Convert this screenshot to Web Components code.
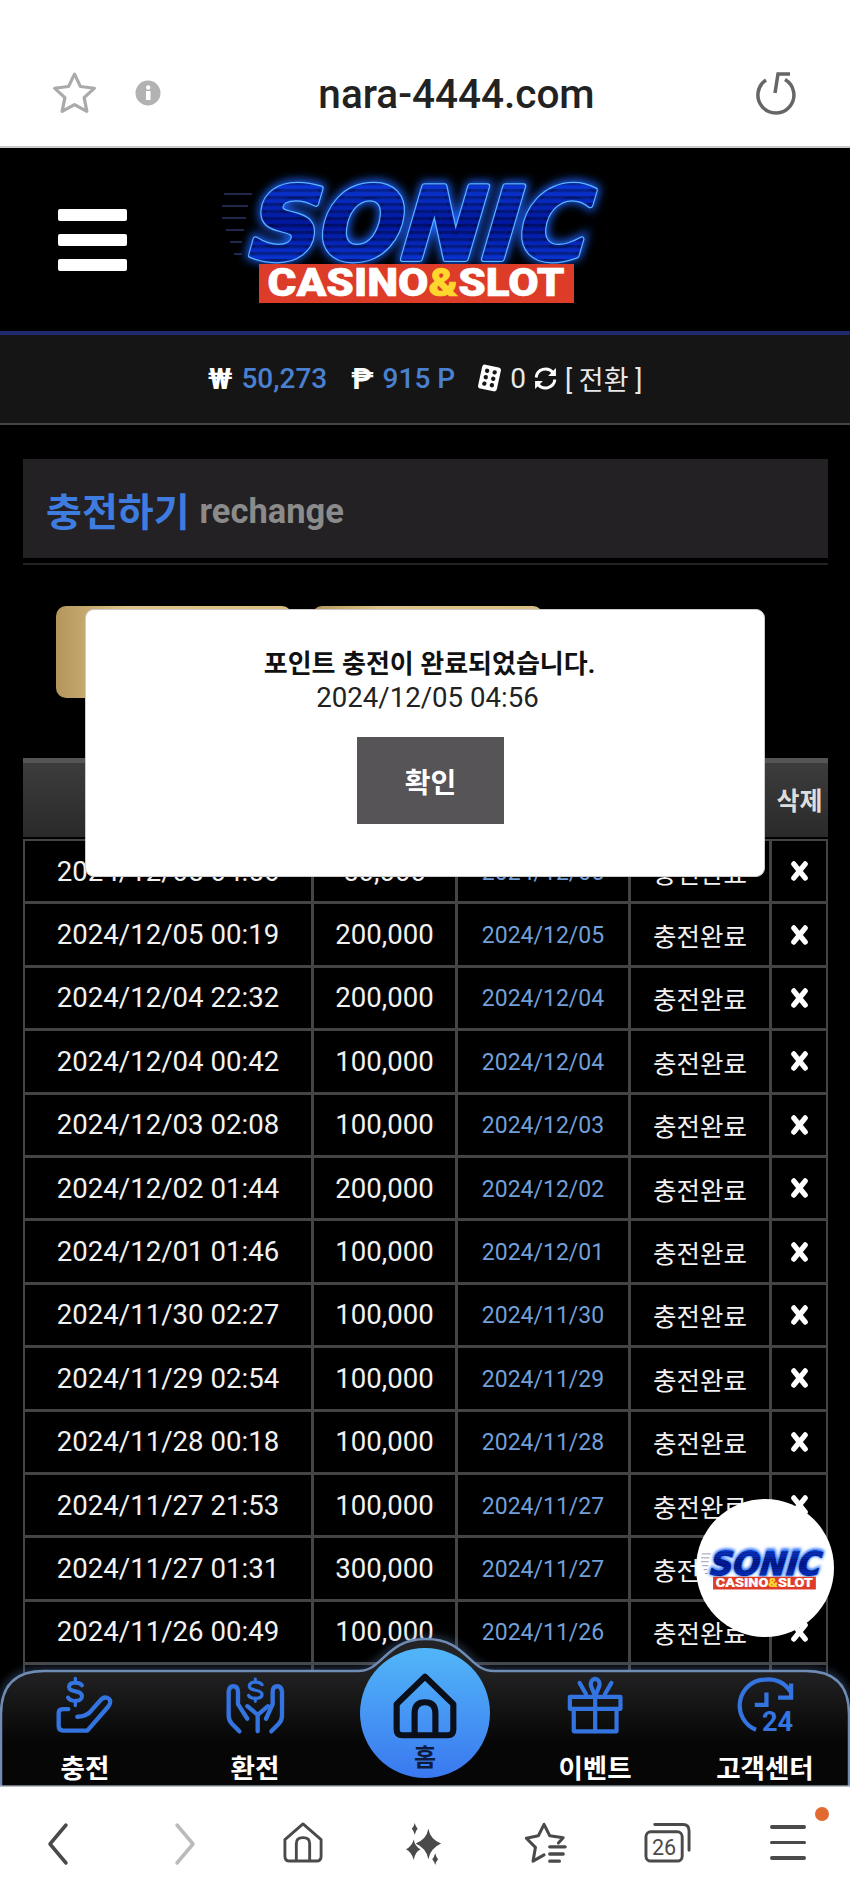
<!DOCTYPE html>
<html lang="ko">
<head>
<meta charset="utf-8">
<title>nara-4444.com</title>
<style>
  html, body { margin: 0; height: 1898px; overflow: hidden; background: #000; }
  body { display: flex; flex-direction: column; font-family: Roboto, "Noto Sans CJK KR", sans-serif; }
</style>
</head>
<body>
<browser-top url="nara-4444.com"></browser-top>
<site-page>
  <site-header></site-header>
  <wallet-bar></wallet-bar>
  <recharge-panel>
    <recharge-row when="2024/12/05 04:56" amount="50,000" day="2024/12/05"></recharge-row>
    <recharge-row when="2024/12/05 00:19" amount="200,000" day="2024/12/05"></recharge-row>
    <recharge-row when="2024/12/04 22:32" amount="200,000" day="2024/12/04"></recharge-row>
    <recharge-row when="2024/12/04 00:42" amount="100,000" day="2024/12/04"></recharge-row>
    <recharge-row when="2024/12/03 02:08" amount="100,000" day="2024/12/03"></recharge-row>
    <recharge-row when="2024/12/02 01:44" amount="200,000" day="2024/12/02"></recharge-row>
    <recharge-row when="2024/12/01 01:46" amount="100,000" day="2024/12/01"></recharge-row>
    <recharge-row when="2024/11/30 02:27" amount="100,000" day="2024/11/30"></recharge-row>
    <recharge-row when="2024/11/29 02:54" amount="100,000" day="2024/11/29"></recharge-row>
    <recharge-row when="2024/11/28 00:18" amount="100,000" day="2024/11/28"></recharge-row>
    <recharge-row when="2024/11/27 21:53" amount="100,000" day="2024/11/27"></recharge-row>
    <recharge-row when="2024/11/27 01:31" amount="300,000" day="2024/11/27"></recharge-row>
    <recharge-row when="2024/11/26 00:49" amount="100,000" day="2024/11/26"></recharge-row>
    <recharge-row></recharge-row>
  </recharge-panel>
  <alert-box title="포인트 충전이 완료되었습니다." time="2024/12/05 04:56" action="확인"></alert-box>
  <float-badge></float-badge>
  <tab-bar></tab-bar>
</site-page>
<browser-bottom></browser-bottom>

<script>
/**
 * Inline icons, keyed by name. Each entry is [viewBox, inner markup].
 */
const ICONS = {
  star: ['0 0 44 44', '<path d="M22 3l5.6 12.6 13 1.6-9.6 9.4 2.6 13.8L22 33.6 10.4 40.4 13 26.6 3.400 17.200l13-1.600z" fill="none" stroke="#aaa" stroke-width="3" stroke-linejoin="round"/>'],
  info: ['0 0 26 26', '<circle cx="13" cy="13" r="12.500" fill="#b2b2b2"/><rect x="11" y="11" width="4.500" height="9" fill="#fff"/><circle cx="13.200" cy="7.500" r="2.200" fill="#fff"/>'],
  reload: ['0 0 44 44', '<path d="M14 9A18 18 0 1 0 33 8.500" fill="none" stroke="#666" stroke-width="3.500"/><path d="M38 3H26L23 22" fill="none" stroke="#666" stroke-width="3.500"/>'],
  dice: ['0 0 24 32', '<g transform="rotate(12 12 16)"><rect x="2" y="3" width="20" height="26" rx="3" fill="#fff"/><g fill="#151515"><circle cx="8" cy="9" r="2.300"/><circle cx="16" cy="9" r="2.300"/><circle cx="8" cy="16" r="2.300"/><circle cx="16" cy="16" r="2.300"/><circle cx="8" cy="23" r="2.300"/><circle cx="16" cy="23" r="2.300"/></g></g>'],
  sync: ['0 0 24 24', '<g fill="none" stroke="#fff" stroke-width="2.800"><path d="M3 11A9.200 9.200 0 0 1 19 6"/><path d="M21 13A9.200 9.200 0 0 1 5 18"/></g><path d="M22 2v7.500h-7.500zM2 22v-7.500h7.500z" fill="#fff"/>'],
  cross: ['0 0 20 22', '<path d="M4 4l12 14M16 4L4 18" stroke="#fff" stroke-width="5.500" stroke-linecap="round"/>'],
  charge: ['165 105 180 175', '<g fill="none" stroke="#3474e0" stroke-width="13" stroke-linecap="round" stroke-linejoin="round"><path d="M205 205H188Q176 205 176 217V256Q176 270 190 270H262L325 197Q338 178 322 171Q310 166 298 182L275 208Q262 226 232 228"/><path d="M246 133C238 122 207 122 207 138C207 156 246 146 246 166C246 184 212 184 204 170" stroke-width="12"/><path d="M226 112V124M226 182V194" stroke-width="10"/></g>'],
  exchange: ['675 105 180 175', '<g fill="none" stroke="#3474e0" stroke-width="13" stroke-linecap="round" stroke-linejoin="round"><path d="M718 272L695 248Q686 238 686 224V152Q688 136 700 136Q713 136 714 152V190L742 234"/><path d="M814 272L837 248Q846 238 846 224V152Q844 136 832 136Q819 136 818 152V190L798 234"/><path d="M773 272V222L742 196"/><path d="M773 222L804 196"/><path d="M786 131C778 120 748 120 748 136C748 152 786 144 786 160C786 176 752 176 746 164" stroke-width="10"/><path d="M766 114V122M766 172V182" stroke-width="9"/></g>'],
  home: ['0 0 72 72', '<path d="M36 4L66 34V62Q66 68 60 68H12Q6 68 6 62V34Z" fill="none" stroke="#0b0f1a" stroke-width="6.500" stroke-linejoin="round"/><path d="M25 67V44Q25 32 36 32Q47 32 47 44V67" fill="none" stroke="#0b0f1a" stroke-width="6.500"/>'],
  gift: ['405 105 185 175', '<g fill="none" stroke="#3474e0" stroke-width="13" stroke-linejoin="round" stroke-linecap="round"><path d="M420 204V168H576V204Z"/><path d="M432 204V272H564V204"/><path d="M498 168V272"/><path d="M498 166L485 135Q482 116 498 114Q514 116 511 135Z"/><path d="M450 126L470 160M548 126L528 160"/></g>'],
  support: ['915 105 185 175', '<g fill="none" stroke="#3474e0" stroke-width="13"><path d="M1086 152A78 78 0 0 0 1008 116A78 78 0 0 0 980 267"/><path d="M1088 128V170H1048"/><path d="M1012 155V192H976"/></g><text x="998" y="272" font-family="Roboto, sans-serif" font-weight="700" font-size="84" fill="#3474e0">24</text>'],
  back: ['0 0 24 44', '<path d="M20 3L4 22L20 41" fill="none" stroke="#4a4a4a" stroke-width="3.500" stroke-linecap="round" stroke-linejoin="round"/>'],
  forward: ['0 0 24 44', '<path d="M4 3L20 22L4 41" fill="none" stroke="#bbb" stroke-width="3.500" stroke-linecap="round" stroke-linejoin="round"/>'],
  house: ['0 0 42 42', '<path d="M21 2L40 18V35Q40 40 35 40H7Q2 40 2 35V18Z" fill="none" stroke="#4a4a4a" stroke-width="3" stroke-linejoin="round"/><path d="M14 39V22Q14 16 21 16Q28 16 28 22V39" fill="none" stroke="#4a4a4a" stroke-width="3"/>'],
  sparkle: ['0 0 38 44', '<g fill="#4a4a4a"><path d="M24 7Q26 18 37 22Q26 27 24 38Q22 27 11 22Q22 18 24 7Z"/><path d="M9 18Q10 25 16 28Q10 31 9 39Q7 31 1 28Q7 25 9 18Z"/><path d="M10 1Q11 5 13 7Q11 9 10 13Q9 9 7 7Q9 5 10 1Z"/><path d="M31 32Q32 36 34 38Q32 40 31 44Q30 40 28 38Q30 36 31 32Z"/></g>'],
  starlist: ['0 0 46 44', '<path d="M37 22L42 16.500L28 14.500L22 2.500L16 14.500L3.500 17L13 26.500L10.500 41L22 34.500" fill="none" stroke="#4a4a4a" stroke-width="3.200" stroke-linejoin="round" stroke-linecap="round"/><path d="M28 26H44M28 33.500H42M28 41H38" stroke="#4a4a4a" stroke-width="3.500" stroke-linecap="round"/>'],
  tabs: ['0 0 48 42', '<rect x="2" y="10" width="37" height="30" rx="5" fill="none" stroke="#4a4a4a" stroke-width="3"/><path d="M11 2.500H40Q46 2.500 46 9V29" fill="none" stroke="#4a4a4a" stroke-width="3" stroke-linecap="round"/><text x="20.500" y="33.500" text-anchor="middle" font-family="Roboto, sans-serif" font-size="22" fill="#4a4a4a">26</text>']
};

/**
 * Draws one icon from the table above.
 * The attribute w sets the width, h the height.
 *
 * @customElement
 */
class UiIcon extends HTMLElement {
  connectedCallback() {
    const [box, body] = ICONS[this.getAttribute('name')];
    const w = this.getAttribute('w');
    const h = this.getAttribute('h');
    this.attachShadow({mode: 'open'}).innerHTML = `
      <style>:host{display:block;width:${w}px;height:${h}px} svg{display:block;width:100%;height:100%;overflow:visible}</style>
      <svg viewBox="${box}" preserveAspectRatio="none">${body}</svg>`;
  }
}
customElements.define('ui-icon', UiIcon);

/**
 * The white address bar of the browser.
 *
 * @customElement
 */
class BrowserTop extends HTMLElement {
  connectedCallback() {
    this.attachShadow({mode: 'open'}).innerHTML = `
      <style>
        :host{display:flex;flex:none;align-items:center;box-sizing:border-box;height:148px;padding:39px 54px 0 51px;background:#fff;border-bottom:2px solid #c9c9c9;color:#222}
        .info{margin-left:37px}
        .url{flex:1;text-align:center;font:500 40.500px Roboto,sans-serif;padding-top:2px}
      </style>
      <ui-icon name="star" w="47" h="44"></ui-icon>
      <ui-icon class="info" name="info" w="26" h="26"></ui-icon>
      <div class="url">${this.getAttribute('url')}</div>
      <ui-icon name="reload" w="44" h="44"></ui-icon>`;
  }
}
customElements.define('browser-top', BrowserTop);

/**
 * The page below the address bar. Clips what runs off under the tab bar
 * and is the frame for the overlays.
 *
 * @customElement
 */
class SitePage extends HTMLElement {
  constructor() {
    super();
    this.attachShadow({mode: 'open'}).innerHTML = `
      <style>:host{display:block;position:relative;flex:1;min-height:0;overflow:hidden;background:#000;color:#fff}</style>
      <slot></slot>`;
  }
}
customElements.define('site-page', SitePage);

/**
 * The SONIC casino logo, kept as real text. The width attribute scales it.
 *
 * @customElement
 */
class SonicLogo extends HTMLElement {
  connectedCallback() {
    const w = this.getAttribute('w');
    const sonic = `x="197" y="77" textLength="340" lengthAdjust="spacingAndGlyphs" transform="skewX(-6) translate(8 0)"`;
    this.attachShadow({mode: 'open'}).innerHTML = `
      <style>:host{display:block;width:${w}px} svg{display:block;width:100%;height:auto;overflow:visible}</style>
      <svg viewBox="0 0 380 128">
        <defs>
          <linearGradient id="fill" x1="0" y1="0" x2="0" y2="1">
            <stop offset="0" stop-color="#1046f2"/><stop offset=".5" stop-color="#00169a"/><stop offset="1" stop-color="#1046f2"/>
          </linearGradient>
          <pattern id="stripes" width="6" height="7" patternUnits="userSpaceOnUse">
            <rect width="6" height="3" fill="#000" opacity=".3"/>
          </pattern>
          <filter id="glow" x="-15%" y="-30%" width="130%" height="160%">
            <feGaussianBlur stdDeviation="5"/>
          </filter>
        </defs>
        <g stroke="#2b3668" stroke-width="1.500">
          <path d="M2 12H30M0 24H26M0 36H24M4 48H22M8 60H20M12 72H20"/>
        </g>
        <g font-family="'DejaVu Sans',sans-serif" font-weight="700" font-style="italic" font-size="100" text-anchor="middle">
          <text ${sonic} fill="#1c62ff" stroke="#1c62ff" stroke-width="9" filter="url(#glow)">SONIC</text>
          <text ${sonic} fill="#5ab4ff" stroke="#5ab4ff" stroke-width="6" stroke-linejoin="round">SONIC</text>
          <text ${sonic} fill="url(#fill)" stroke="url(#fill)" stroke-width="3.500" stroke-linejoin="round">SONIC</text>
          <text ${sonic} fill="url(#stripes)" stroke="url(#stripes)" stroke-width="3.500" stroke-linejoin="round">SONIC</text>
        </g>
        <rect x="37" y="82" width="315" height="39" fill="#dd3c28"/>
        <text x="194" y="114" text-anchor="middle" textLength="297" lengthAdjust="spacingAndGlyphs" font-family="Roboto,sans-serif" font-weight="900" font-size="38" fill="#fff" stroke="#fff" stroke-width=".6">CASINO<tspan fill="#ffd62e" stroke="#ffd62e">&amp;</tspan>SLOT</text>
      </svg>`;
  }
}
customElements.define('sonic-logo', SonicLogo);

/**
 * Site header: burger menu and logo.
 *
 * @customElement
 */
class SiteHeader extends HTMLElement {
  connectedCallback() {
    this.attachShadow({mode: 'open'}).innerHTML = `
      <style>
        :host{display:flex;align-items:flex-start;box-sizing:border-box;height:187px;padding:34px 0 0 58px;background:#000;border-bottom:4px solid #1e2a6b}
        .burger{display:flex;flex-direction:column;gap:13px;margin-top:27px;width:69px}
        .burger i{display:block;height:12px;border-radius:2px;background:#fff}
        sonic-logo{margin-left:95px}
      </style>
      <div class="burger"><i></i><i></i><i></i></div>
      <sonic-logo w="380"></sonic-logo>`;
  }
}
customElements.define('site-header', SiteHeader);

/**
 * Balance line under the header.
 *
 * @customElement
 */
class WalletBar extends HTMLElement {
  connectedCallback() {
    this.attachShadow({mode: 'open'}).innerHTML = `
      <style>
        :host{display:flex;align-items:center;box-sizing:border-box;height:90px;padding:0 0 2px 208px;background:#151515;border-bottom:2px solid #444;font:500 28px Roboto,"Noto Sans CJK KR",sans-serif;color:#e8e8e8;white-space:nowrap}
        b{color:#fff;font-weight:700;font-size:30px}
        .num{color:#4a80d0;margin-left:9px}
        .p{margin-left:24px}
        ui-icon{flex:none}
        .n{font-weight:400;margin:0 7px 0 9px}
        .sw{margin-left:7px;font-weight:400;font-size:27px}
      </style>
      <b>₩</b><span class="num">50,273</span>
      <b class="p">₱</b><span class="num">915 P</span>
      <ui-icon style="margin-left:23px" name="dice" w="23" h="30"></ui-icon>
      <span class="n">0</span>
      <ui-icon name="sync" w="25" h="25"></ui-icon>
      <span class="sw">[ 전환 ]</span>`;
  }
}
customElements.define('wallet-bar', WalletBar);

/**
 * Recharge section: title, the two tab buttons and the table. Rows are slotted.
 *
 * @customElement
 */
class RechargePanel extends HTMLElement {
  connectedCallback() {
    this.attachShadow({mode: 'open'}).innerHTML = `
      <style>
        :host{display:block;padding:34px 22px 0 23px}
        .title{display:flex;align-items:center;gap:10px;height:99px;padding:0 0 0 23px;background:#232123}
        .title strong{font:700 39px Roboto,"Noto Sans CJK KR",sans-serif;color:#3f7ce0}
        .title span{font:700 34.500px Roboto,sans-serif;color:#8b8b8b;padding-top:4px}
        .rule{height:2px;margin-top:5px;background:#222}
        .tabs{display:flex;gap:20px;padding:41px 0 0 33px}
        .tabs i{display:block;height:92px;border-radius:10px;background:linear-gradient(90deg,#b4965c,#dcc288 30%,#d8bd82)}
        .tabs i:first-child{width:236px}
        .tabs i:last-child{width:231px}
        .head{display:flex;justify-content:flex-end;align-items:center;box-sizing:border-box;height:79px;margin-top:60px;padding-bottom:3px;border-top:5px solid #555;background:linear-gradient(#3c3c3c,#2a2a2a);font:700 25px "Noto Sans CJK KR",sans-serif;color:#ddd}
        .head span{width:57px;text-align:center}
        .rows{display:block;margin-top:2px;background:#444;padding-top:2px}
      </style>
      <div class="title"><strong>충전하기</strong><span>rechange</span></div>
      <div class="rule"></div>
      <div class="tabs"><i></i><i></i></div>
      <div class="head"><span>삭제</span></div>
      <div class="rows"><slot></slot></div>`;
  }
}
customElements.define('recharge-panel', RechargePanel);

/**
 * One row of the recharge table.
 *
 * @customElement
 */
class RechargeRow extends HTMLElement {
  connectedCallback() {
    const when = this.getAttribute('when');
    const filled = when !== null;
    this.attachShadow({mode: 'open'}).innerHTML = `
      <style>
        :host{display:grid;grid-template-columns:286px 141px 170px 138px 1fr;gap:3px;height:60.400px;padding:0 2px 3px;font:400 27.600px Roboto,"Noto Sans CJK KR",sans-serif;color:#f2f2f2}
        div{display:flex;align-items:center;justify-content:center;background:#000;white-space:nowrap}
        .day{font-size:23px;color:#719fd8;padding-top:2px}
        .state{font-size:25.500px}
      </style>
      <div>${filled ? when : ''}</div>
      <div>${filled ? this.getAttribute('amount') : ''}</div>
      <div class="day">${filled ? this.getAttribute('day') : ''}</div>
      <div class="state">${filled ? '충전완료' : ''}</div>
      <div>${filled ? '<ui-icon name="cross" w="19" h="22"></ui-icon>' : ''}</div>`;
  }
}
customElements.define('recharge-row', RechargeRow);

/**
 * The white confirmation dialog that lies over the panel.
 *
 * @customElement
 */
class AlertBox extends HTMLElement {
  connectedCallback() {
    this.attachShadow({mode: 'open'}).innerHTML = `
      <style>
        :host{position:absolute;left:85px;top:461px;width:680px;height:268px;box-sizing:border-box;padding:36px 0 0 9px;display:flex;flex-direction:column;align-items:center;background:#fff;border-radius:9px;border:1px solid #ccc;color:#111;font-family:Roboto,"Noto Sans CJK KR",sans-serif}
        .t{font-weight:700;font-size:26px;line-height:36px;white-space:nowrap}
        .d{font-size:27.600px;line-height:32px;color:#222;margin-right:4px}
        .b{display:flex;align-items:center;justify-content:center;width:147px;height:87px;margin:23px 0 0 2px;background:#565456;color:#fff;font-weight:700;font-size:28px}
      </style>
      <div class="t">${this.getAttribute('title')}</div>
      <div class="d">${this.getAttribute('time')}</div>
      <div class="b">${this.getAttribute('action')}</div>`;
  }
}
customElements.define('alert-box', AlertBox);

/**
 * Floating round button with the small logo.
 *
 * @customElement
 */
class FloatBadge extends HTMLElement {
  connectedCallback() {
    this.attachShadow({mode: 'open'}).innerHTML = `
      <style>:host{position:absolute;right:16px;bottom:150px;width:138px;height:138px;border-radius:50%;background:#fff;display:flex;align-items:center;justify-content:center}
      sonic-logo{margin-left:-4px;margin-top:5px}</style>
      <sonic-logo w="124"></sonic-logo>`;
  }
}
customElements.define('float-badge', FloatBadge);

/**
 * Bottom tab bar with the raised home button.
 *
 * @customElement
 */
class TabBar extends HTMLElement {
  connectedCallback() {
    const tabs = [['charge', '충전'], ['exchange', '환전'], null, ['gift', '이벤트'], ['support', '고객센터']];
    const items = tabs.map(t => t
      ? `<div class="tab"><ui-icon name="${t[0]}" w="60" h="58"></ui-icon><span>${t[1]}</span></div>`
      : `<div class="tab mid"><div class="circle"><ui-icon name="home" w="68" h="66"></ui-icon><span>홈</span></div></div>`
    ).join('');
    this.attachShadow({mode: 'open'}).innerHTML = `
      <style>
        :host{position:absolute;left:0;right:0;bottom:0;height:149px;display:grid;grid-template-columns:repeat(5,170px);font-family:"Noto Sans CJK KR",sans-serif;color:#fff}
        svg.shape{position:absolute;left:0;top:0;width:850px;height:149px;overflow:visible;}
        .tab{position:relative;display:flex;flex-direction:column;align-items:center;padding-top:38px}
        .tab span{margin-top:17px;font-weight:700;font-size:26.500px;line-height:32px;white-space:nowrap}
        .mid{padding-top:10px}
        .circle{display:flex;flex-direction:column;align-items:center;box-sizing:border-box;width:130px;height:130px;padding-top:25px;border-radius:50%;background:linear-gradient(#52b6f8,#3a78f0)}
        .circle span{margin-top:3px;font-size:24px;line-height:28px;color:#0d1c3c}
      </style>
      <svg class="shape" viewBox="0 0 850 149" preserveAspectRatio="none">
        <defs>
          <linearGradient id="bg" x1="0" y1="0" x2="0" y2="1"><stop offset=".2" stop-color="#232325"/><stop offset=".7" stop-color="#060606"/></linearGradient>
          <filter id="halo" x="-5%" y="-20%" width="110%" height="140%"><feGaussianBlur stdDeviation="4"/></filter>
        </defs>
        <path d="M1 149V76Q1 33 44 33H358C384 33 385 1 426 1C467 1 468 33 494 33H806Q849 33 849 76V149" fill="none" stroke="#5a7cb0" stroke-width="5" opacity=".6" filter="url(#halo)"/>
        <path d="M1 149V76Q1 33 44 33H358C384 33 385 1 426 1C467 1 468 33 494 33H806Q849 33 849 76V149Z" fill="url(#bg)" stroke="#6f8cb4" stroke-width="2.500"/>
        <rect y="147.500" width="850" height="1.500" fill="#b9bdc4"/>
      </svg>
      ${items}`;
  }
}
customElements.define('tab-bar', TabBar);

/**
 * The white bottom toolbar of the browser.
 *
 * @customElement
 */
class BrowserBottom extends HTMLElement {
  connectedCallback() {
    const set = [['back', 24, 44, -6], ['forward', 24, 44, 6], ['house', 40, 41, -2], ['sparkle', 37, 43, -2], ['starlist', 44, 42, -3], ['tabs', 47, 41, 0]];
    const cells = set.map(i => `<div><ui-icon style="margin-left:${i[3]}px" name="${i[0]}" w="${i[1]}" h="${i[2]}"></ui-icon></div>`).join('');
    this.attachShadow({mode: 'open'}).innerHTML = `
      <style>
        :host{display:grid;flex:none;grid-template-columns:repeat(7,1fr);height:111px;padding-bottom:0;background:#fff}
        div{display:flex;align-items:flex-start;justify-content:center;padding-top:35px}
        .menu{position:relative;flex-direction:column;align-items:center;gap:12px;justify-content:flex-start;padding-top:38px;margin-left:-2px}
        .menu i{display:block;width:36px;height:3.500px;border-radius:2px;background:#4a4a4a}
        .menu u{position:absolute;left:88px;top:20px;width:14px;height:14px;border-radius:50%;background:#e06a30}
      </style>
      ${cells}
      <div class="menu"><i></i><i></i><i></i><u></u></div>`;
  }
}
customElements.define('browser-bottom', BrowserBottom);
</script>
</body>
</html>
